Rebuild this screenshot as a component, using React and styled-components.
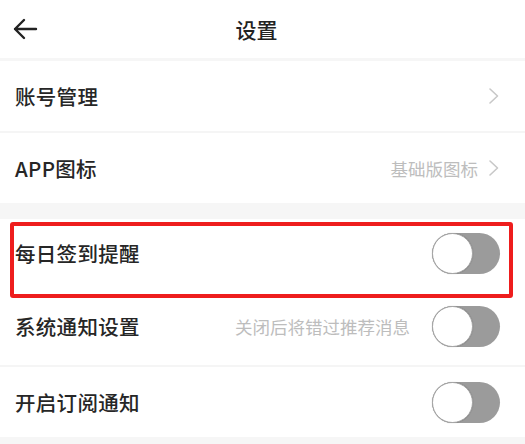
import React from "react";
import styled, { createGlobalStyle } from "styled-components";

const Global = createGlobalStyle`
  html, body { margin: 0; padding: 0; background: #ffffff; }
  body { font-family: "Noto Sans CJK SC", "Noto Sans", sans-serif; }
`;

const Page = styled.div`
  width: 525px;
  height: 444px;
  overflow: hidden;
  background: #f6f6f6;
  display: flex;
  flex-direction: column;
`;

const Header = styled.div`
  height: 58px;
  background: #fff;
  display: grid;
  grid-template-columns: 60px 1fr 72px;
  align-items: center;
`;

const BackBtn = styled.div`
  display: flex;
  align-items: center;
  padding-left: 12px;
  height: 100%;
`;

const Title = styled.div`
  text-align: center;
  font-size: 21px;
  font-weight: 500;
  color: #222;
`;

const Group = styled.div`
  display: flex;
  flex-direction: column;
  gap: 2px;
  background: #f5f5f5;
  margin-top: ${(p) => p.$gap}px;
`;

const Row = styled.div`
  position: relative;
  background: #fff;
  height: ${(p) => p.$h}px;
  display: flex;
  align-items: center;
  padding: 0 25px 0 15px;
  margin-bottom: ${(p) => (p.$joined ? -2 : 0)}px;
`;

const Label = styled.div`
  flex: 1;
  font-size: 20.5px;
  font-weight: 500;
  color: #262626;
  letter-spacing: 0.3px;
`;

const Hint = styled.div`
  font-size: 17.5px;
  color: #bdbdbd;
  margin-right: ${(p) => p.$mr}px;
`;

const Chevron = styled.svg`
  width: 12px;
  height: 18px;
  margin-left: 10px;
`;

const Track = styled.div`
  width: 68px;
  height: 41px;
  border-radius: 21px;
  background: #9b9b9b;
  display: flex;
  align-items: center;
`;

const Knob = styled.div`
  width: 39px;
  height: 39px;
  border-radius: 50%;
  background: #fff;
  border: 1px solid #a5a5a5;
  box-shadow: 0 0 1px rgba(0,0,0,0.3);
`;

const Highlight = styled.div`
  position: absolute;
  left: 10px;
  right: 12px;
  top: 3px;
  bottom: -11px;
  border: 4px solid #ee1d1d;
  border-radius: 3px;
  pointer-events: none;
  z-index: 2;
`;

const Toggle = () => (
  <Track>
    <Knob />
  </Track>
);

const Arrow = () => (
  <Chevron viewBox="0 0 12 18">
    <path d="M2 2 L9.5 9 L2 16" fill="none" stroke="#c8c8c8" strokeWidth="1.6" strokeLinecap="round" strokeLinejoin="round" />
  </Chevron>
);

export default function App() {
  return (
    <>
      <Global />
      <Page>
        <Header>
          <BackBtn>
            <svg width="26" height="26" viewBox="0 0 26 26">
              <path d="M24 13 H3 M12 4 L3 13 L12 22" fill="none" stroke="#222" strokeWidth="2.4" strokeLinecap="round" strokeLinejoin="round" />
            </svg>
          </BackBtn>
          <Title>设置</Title>
          <div />
        </Header>
        <Group $gap={3}>
          <Row $h={70}>
            <Label>账号管理</Label>
            <Arrow />
          </Row>
          <Row $h={70}>
            <Label>APP图标</Label>
            <Hint $mr={0}>基础版图标</Hint>
            <Arrow />
          </Row>
        </Group>
        <Group $gap={16}>
          <Row $h={68} $joined>
            <Label>每日签到提醒</Label>
            <Toggle />
            <Highlight />
          </Row>
          <Row $h={78}>
            <Label>系统通知设置</Label>
            <Hint $mr={22}>关闭后将错过推荐消息</Hint>
            <Toggle />
          </Row>
          <Row $h={70}>
            <Label>开启订阅通知</Label>
            <Toggle />
          </Row>
        </Group>
      </Page>
    </>
  );
}
